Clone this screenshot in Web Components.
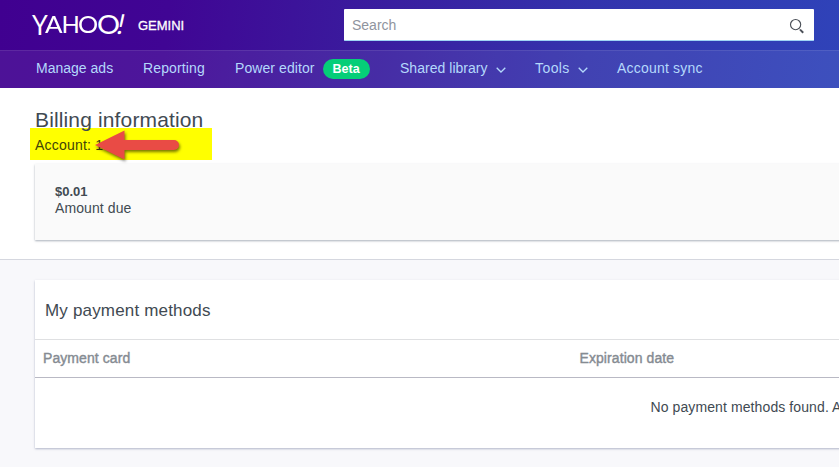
<!DOCTYPE html>
<html lang="en"><head><meta charset="utf-8"><title>Billing information</title>
<style>
html,body{margin:0;width:839px;height:467px;overflow:hidden;background:#f8f8fb}
body{font:14px/17px "Liberation Sans",Arial,sans-serif;color:#414a52}
</style></head><body>
<billing-page></billing-page>
<script>
const define=(name,css,html)=>customElements.define(name,class extends HTMLElement{
  constructor(){super();this.attachShadow({mode:'open'}).innerHTML=`<style>*{box-sizing:border-box}${css}</style>${html}`}
});

define('yahoo-logo',`
:host{display:flex;width:344px;height:50px;padding:11px 0 0 32px;color:#fff;align-items:flex-start}
.y{display:flex;width:106px;font:24px/26px Lato,sans-serif;height:28px;align-items:flex-start}
.y span{display:block;transform-origin:0 0}
.g{font-size:13px;line-height:16px;margin-top:7px;-webkit-text-stroke:.3px #fff}`,
`<div class="y"><span style="width:13px;transform:translateY(-1px) scale(1.05,1.12)">Y</span><span style="width:16.5px;transform:scaleX(1.08)">A</span><span style="width:16px;transform:scaleX(1)">H</span><span style="width:19.5px;transform:scaleX(1.05)">O</span><span style="width:24px;transform:translateY(-2px) scale(1.2,1.13)">O</span><span style="transform:translateY(-2px) skewX(-12deg) scale(1.1,1.15)">!</span></div><div class="g">GEMINI</div>`);

define('search-box',`
:host{display:flex;width:470px;height:32px;background:#fff;border-bottom:1px solid #9fd4f5;border-radius:1px;margin-top:9px;padding:8px 9px 0 8px;justify-content:space-between;color:#8f949e}
svg{display:block;margin-top:1px}`,
`<slot></slot><svg width="16" height="16" fill="none" stroke="#4b5058"><circle cx="6.6" cy="6.6" r="5.1" stroke-width="1.15"/><path d="M10.2 10.6l1 1" stroke-width="1"/><path d="M11.1 11.6l3.1 3.1" stroke-width="2"/></svg>`);

define('nav-item',`
:host{display:flex;align-items:center;height:35px;color:#b4d9fc;letter-spacing:var(--track,.08px);white-space:nowrap}
svg{display:none;margin:2px 0 0 8px}:host([menu]) svg{display:block}`,
`<slot></slot><svg width="10" height="6" fill="none" stroke="#b4d9fc" stroke-width="1.3"><path d="M.7.7L5 5L9.3.7"/></svg>`);

define('beta-badge',`
:host{display:block;width:47px;height:20px;margin-left:8px;border-radius:10px;background:#05ce78;color:#fff;font-weight:bold;font-size:12.5px;line-height:20px;text-align:center;letter-spacing:0}`,`<slot></slot>`);

define('app-header',`
:host{display:block;height:88px;background:linear-gradient(97deg,#400090 0%,#400594 20%,#3a1a9d 42%,#3334ad 70%,#2f43b9 100%)}
.top{display:flex;height:50px}
nav{display:flex;height:38px;background:#ffffff12;border-top:1px solid #ffffff18;padding-left:36px}`,
`<div class="top"><yahoo-logo></yahoo-logo><search-box>Search</search-box></div>
<nav><nav-item style="width:107px;--track:.01px">Manage ads</nav-item><nav-item style="width:92px;--track:.12px">Reporting</nav-item><nav-item style="width:165px">Power editor<beta-badge>Beta</beta-badge></nav-item><nav-item menu style="width:135px;--track:.03px">Shared library</nav-item><nav-item menu style="width:82px;--track:.42px">Tools</nav-item><nav-item style="--track:.2px">Account sync</nav-item></nav>`);

define('account-highlight',`
:host{display:block;position:relative;width:182px;height:32px;margin:0 0 0 -5px;background:#ff0;padding:9px 0 0 5px;color:#3f4508;white-space:pre;letter-spacing:.2px}
svg{position:absolute;left:60px;top:-4px;overflow:visible;filter:drop-shadow(1px 2px 1.5px #0008)}`,
`<slot></slot><svg width="96" height="40"><path d="M5 21L34.5 6.5V16H84a5 5 0 0 1 0 10H34.5V35.5Z" fill="#e94b45"/></svg>`);

define('amount-card',`
:host{display:block;width:820px;height:76px;margin-top:4px;padding:19px 20px;background:#fafafa;box-shadow:0 1px 2px #7e8898aa}
b{display:block;font-size:13px;line-height:17px}span{letter-spacing:.1px}`,`<b>$0.01</b><span><slot></slot></span>`);

define('billing-summary',`
:host{display:block;height:172px;background:#fff;border-bottom:1px solid #d5d7df;padding:20px 0 0 35px}
h1{font-weight:normal;font-size:21px;line-height:24px;height:20px;margin:0;letter-spacing:.14px;position:relative;z-index:1}`,
`<h1>Billing information</h1><account-highlight>Account: 1</account-highlight><amount-card>Amount due</amount-card>`);

define('payment-methods',`
:host{display:block;width:820px;height:168px;margin:20px 0 0 35px;background:#fff;box-shadow:0 1px 2px #8f94b0aa}
h2{height:60px;margin:0;padding-left:10px;font-weight:normal;font-size:17px;line-height:61px;letter-spacing:.17px;border-bottom:1px solid #dfe0e2}
.head{display:grid;grid-template-columns:536.5px 1fr;height:38px;padding-left:8px;line-height:37px;color:#858b92;letter-spacing:.08px;border-bottom:1px solid #b9b9c4;-webkit-text-stroke:.4px #858b92}
.empty{padding:21px 0 0 615.5px;white-space:nowrap;letter-spacing:.1px}`,
`<h2>My payment methods</h2><div class="head"><span>Payment card</span><span>Expiration date</span></div><div class="empty">No payment methods found. A</div>`);

define('billing-page',`:host{display:block;width:839px;height:467px;overflow:hidden}`,
`<app-header></app-header><billing-summary></billing-summary><payment-methods></payment-methods>`);
</script></body></html>
